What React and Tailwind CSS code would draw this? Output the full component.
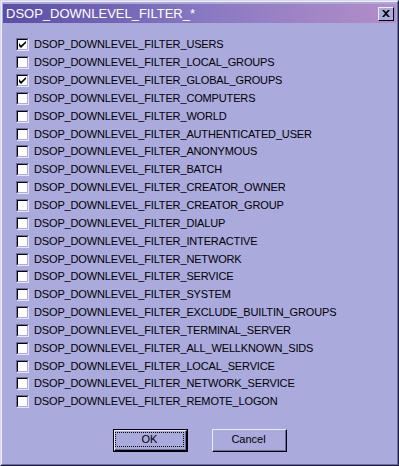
import React, { useState } from 'react';

const FILTERS = [
  ['USERS', true],
  ['LOCAL_GROUPS', false],
  ['GLOBAL_GROUPS', true],
  ['COMPUTERS', false],
  ['WORLD', false],
  ['AUTHENTICATED_USER', false],
  ['ANONYMOUS', false],
  ['BATCH', false],
  ['CREATOR_OWNER', false],
  ['CREATOR_GROUP', false],
  ['DIALUP', false],
  ['INTERACTIVE', false],
  ['NETWORK', false],
  ['SERVICE', false],
  ['SYSTEM', false],
  ['EXCLUDE_BUILTIN_GROUPS', false],
  ['TERMINAL_SERVER', false],
  ['ALL_WELLKNOWN_SIDS', false],
  ['LOCAL_SERVICE', false],
  ['NETWORK_SERVICE', false],
  ['REMOTE_LOGON', false],
];

function CheckBox({ checked, onToggle }) {
  return (
    <button
      onClick={onToggle}
      className="w-[13px] h-[13px] shrink-0 border-t border-l border-[#6b6b9c] border-r border-b border-r-[#e4e4ff] border-b-[#e4e4ff] p-0"
    >
      <div className="w-full h-full bg-white border-t border-l border-black border-r border-b border-r-[#aaaadd] border-b-[#aaaadd] flex items-center justify-center">
        {checked && (
          <svg width="7" height="7" viewBox="0 0 7 7">
            <path d="M0 2v3l2 2 5-5V0L2 4.5z" fill="#000" />
          </svg>
        )}
      </div>
    </button>
  );
}

function Win98Button({ children, isDefault }) {
  return (
    <button className={`w-[75px] h-[23px] p-0 ${isDefault ? 'border border-black' : ''}`}>
      <div className="w-full h-full border-t border-l border-[#ececff] border-r border-b border-r-black border-b-black">
        <div className="w-full h-full border-r border-b border-[#6b6b9c] border-t-0 border-l-0 flex items-center justify-center text-black">
          {isDefault ? (
            <span className="border border-dotted border-black px-[26px] leading-[13px]">{children}</span>
          ) : (
            <span className="leading-[13px]">{children}</span>
          )}
        </div>
      </div>
    </button>
  );
}

export default function App() {
  const [filters, setFilters] = useState(FILTERS);

  function toggle(i) {
    setFilters(prev => prev.map((f, j) => (j === i ? [f[0], !f[1]] : f)));
  }

  return (
    <div
      className="w-[399px] h-[466px] bg-[#aaaadd] border-t border-l border-[#d8d8f5] border-r border-b border-r-[#1e1e40] border-b-[#1e1e40] flex flex-col"
      style={{ fontFamily: '"Liberation Sans", Arial, sans-serif' }}
    >
      <div className="h-full w-full border-t border-l border-[#f0f0ff] border-r border-b border-r-[#6b6b9c] border-b-[#6b6b9c] flex flex-col p-[1px]">
        {/* Title bar */}
        <div className="h-[19px] mt-[1px] flex items-center justify-between pl-[3px] pr-[2px] bg-gradient-to-r from-[#5a4ea6] via-[#8878c2] to-[#b48ec8]">
          <span className="text-white text-[13px] leading-none">DSOP_DOWNLEVEL_FILTER_*</span>
          <div className="w-[16px] h-[14px] bg-[#aaaadd] border-t border-l border-[#ececff] border-r border-b border-r-black border-b-black flex items-center justify-center">
            <svg width="8" height="7" viewBox="0 0 8 7">
              <path d="M0 0h2l2 2 2-2h2L5 3.5 8 7H6L4 5 2 7H0l3-3.5z" fill="#000" />
            </svg>
          </div>
        </div>

        {/* Filter list */}
        <div className="flex flex-col pl-[13px] pt-[13px]">
          {filters.map(([name, checked], i) => (
            <div key={name} className="h-[17.85px] flex items-center gap-[5px]">
              <CheckBox checked={checked} onToggle={() => toggle(i)} />
              <span className="text-[11px] tracking-[-0.15px] text-black leading-none whitespace-nowrap">
                DSOP_DOWNLEVEL_FILTER_{name}
              </span>
            </div>
          ))}
        </div>

        {/* Buttons */}
        <div className="flex justify-center gap-[24px] mt-[18px] text-[11px]">
          <Win98Button isDefault>OK</Win98Button>
          <Win98Button>Cancel</Win98Button>
        </div>
      </div>
    </div>
  );
}
